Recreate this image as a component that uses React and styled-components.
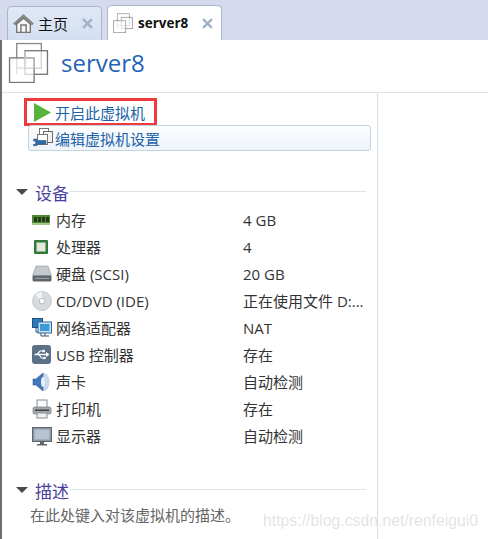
import React from 'react';
import styled, { createGlobalStyle } from 'styled-components';

const Global = createGlobalStyle`
  html, body { margin: 0; padding: 0; background: #fff; }
  body { font-family: "Open Sans", "Noto Sans CJK SC", sans-serif; }
`;

const Page = styled.div`
  position: relative;
  width: 488px;
  height: 539px;
  overflow: hidden;
  background: #fff;
`;

const TabBar = styled.div`
  height: 40px;
  box-sizing: border-box;
  padding: 5px 0 0 7px;
  display: flex;
  align-items: flex-end;
  gap: 5px;
  background: #d5daee;
`;

const Tab = styled.div`
  box-sizing: border-box;
  width: ${p => p.$width}px;
  height: ${p => (p.$active ? 35 : 34)}px;
  padding-left: 5px;
  display: flex;
  align-items: center;
  border: 1px solid #a9b5c9;
  border-bottom: none;
  border-radius: 5px 5px 0 0;
  background: ${p => (p.$active ? '#fff' : 'linear-gradient(#dfe8f6, #d3dff1)')};
`;

const TabLabel = styled.span`
  margin-left: ${p => (p.$active ? 5 : 4)}px;
  font-size: ${p => (p.$active ? 13.5 : 15)}px;
  font-weight: ${p => (p.$active ? 700 : 400)};
  color: #111;
  white-space: nowrap;
`;

const TabClose = styled.span`
  margin-left: auto;
  margin-right: 8px;
  display: flex;
  color: #9db0c4;
`;

const Body = styled.div`
  height: 499px;
  border-left: 2px solid #6e6e6e;
`;

const Header = styled.div`
  height: 53px;
  box-sizing: border-box;
  padding: 0 0 7px 6px;
  display: flex;
  align-items: center;
  gap: 12px;
  border-bottom: 1px solid #dde4e8;
`;

const Title = styled.h1`
  margin: 0;
  font-size: 24px;
  font-weight: 400;
  color: #1f63b5;
`;

const Content = styled.div`
  display: flex;
  height: 446px;
`;

const Side = styled.div`
  box-sizing: border-box;
  width: 376px;
  padding: 5px 0 0 14px;
  border-right: 1px solid #d3e0e8;
`;

const Action = styled.div`
  box-sizing: border-box;
  display: flex;
  align-items: center;
  gap: 4px;
  font-size: 15px;
  color: #2161a8;
  white-space: nowrap;
`;

const StartAction = styled(Action)`
  width: 133px;
  height: 28px;
  margin-left: 8px;
  padding-left: 7px;
  border: 3px solid #ee3a3f;
`;

const EditAction = styled(Action)`
  width: 343px;
  height: 26px;
  margin: -1px 0 0 12px;
  padding-left: 3px;
  gap: 1px;
  border: 1px solid #c5d3dc;
  border-radius: 3px;
  background: linear-gradient(#fcfdfe, #edf4fb);
`;

const Section = styled.section`
  margin-top: ${p => p.$top}px;
`;

const SectionHead = styled.div`
  display: flex;
  align-items: center;
  height: 22px;
  color: #4b3f9e;
  font-size: 17px;
`;

const Caret = styled.span`
  width: 0;
  height: 0;
  margin-right: 7px;
  border-left: 6px solid transparent;
  border-right: 6px solid transparent;
  border-top: 6px solid #4a4a4a;
`;

const Rule = styled.span`
  flex: none;
  width: 296px;
  height: 1px;
  margin: 0 0 2px 1px;
  background: #dbe2ea;
`;

const Devices = styled.div`
  margin: 3px 0 0 16px;
`;

const Device = styled.div`
  display: grid;
  grid-template-columns: 24px 187px 1fr;
  align-items: center;
  height: 27px;
  font-size: 15px;
  color: #333;
  white-space: nowrap;
`;

const Note = styled.div`
  margin: 3px 0 0 14px;
  font-size: 15px;
  color: #666;
`;

const Watermark = styled.div`
  position: absolute;
  left: 263px;
  top: 512px;
  font-family: "Liberation Sans", sans-serif;
  font-size: 15.8px;
  color: rgba(170, 170, 170, 0.34);
  white-space: nowrap;
`;

const Home = () => (
  <svg width="21" height="21" viewBox="0 0 20 20">
    <path d="M.5 10 10 1.500 19.500 10l-1.500 1.500L10 4.500l-8 7z" fill="#8b8b8b" stroke="#666" strokeWidth=".5" />
    <path d="M3.500 10.500V18.500h13v-8L10 5z" fill="#f6f6f6" stroke="#777" strokeWidth="1.300" />
    <path d="M7.500 18.500v-7h5v7" fill="none" stroke="#777" strokeWidth="1.400" />
  </svg>
);

const Close = () => (
  <svg width="11" height="11" viewBox="0 0 10 10">
    <path d="M1 1l8 8M9 1 1 9" stroke="currentColor" strokeWidth="2" />
  </svg>
);

const VmIcon = ({ size }) => (
  <svg width={size} height={size} viewBox="0 0 40 40" fill="none">
    <rect x="8.500" y="1.500" width="24" height="24" stroke="#8a8a8a" strokeWidth="1.300" fill="#fff" />
    <rect x="16.500" y="8.500" width="22" height="23" stroke="#777" strokeWidth="1.300" fill="#fff" fillOpacity=".6" />
    <rect x="1.500" y="15.500" width="24" height="24" stroke="#777" strokeWidth="1.300" fill="#fff" fillOpacity=".7" />
    <path d="M16.500 15.500h9v10h-9z" stroke="#c6d0d8" strokeWidth="1" />
    <path d="M16.500 8.500v7M8.500 25.500v6" stroke="#d4dbe0" strokeWidth="1" />
  </svg>
);

const Play = () => (
  <svg width="17" height="19" viewBox="0 0 17 19">
    <path d="M0 0l17 9.500L0 19z" fill="#57b33e" />
  </svg>
);

const Wrench = () => (
  <svg width="22" height="22" viewBox="0 0 22 22" fill="none">
    <rect x="7.500" y="1.500" width="9" height="9" stroke="#777" fill="#fff" />
    <rect x="11.500" y="4.500" width="9" height="11" stroke="#666" fill="#f4f4f4" />
    <rect x="5.500" y="7.500" width="10" height="10" stroke="#777" fill="#fff" />
    <path d="M1 13c2-1.500 4-1.500 5 .5h8v3.500H6c-1 2-3 2.500-5 1l3-1.500-.2-1.500z" fill="#2f6fa8" stroke="#1e4f7d" strokeWidth=".6" />
  </svg>
);

const Ram = () => (
  <svg width="18" height="18" viewBox="0 0 18 18">
    <rect x="0" y="4" width="18" height="10" fill="#4e8a34" />
    <rect x="0" y="12" width="18" height="2" fill="#a8c48a" />
    <path d="M2 6h3v5H2zM6 6h3v5H6zM10 6h3v5h-3zM14 6h3v5h-3z" fill="#26391d" />
  </svg>
);

const Cpu = () => (
  <svg width="18" height="18" viewBox="0 0 18 18">
    <rect x="2" y="2" width="14" height="14" rx="1" fill="#2f7a3a" />
    <rect x="4.500" y="4.500" width="9" height="9" fill="#e4e7dc" stroke="#9aa88f" strokeWidth=".5" />
  </svg>
);

const Disk = () => (
  <svg width="20" height="18" viewBox="0 0 20 18">
    <path d="M4 1h12l3.500 10H.5z" fill="#c4c9ce" stroke="#8f959b" strokeWidth=".6" />
    <rect x=".5" y="10.500" width="19" height="6" rx="1.500" fill="#5f666c" />
    <rect x="3" y="12.800" width="14" height="1.200" fill="#959ca2" />
  </svg>
);

const Cd = () => (
  <svg width="20" height="20" viewBox="0 0 20 20">
    <circle cx="10" cy="10" r="9.500" fill="#d6dbe0" stroke="#adb4ba" strokeWidth=".6" />
    <path d="M10 10 3 4a9.500 9.500 0 0 1 7-3z" fill="#f1f4f6" />
    <circle cx="10" cy="10" r="2.800" fill="#fff" stroke="#a2a9af" strokeWidth=".7" />
  </svg>
);

const Net = () => (
  <svg width="20" height="20" viewBox="0 0 20 20">
    <rect x="0.500" y="0.500" width="10" height="9" fill="#2f79bb" stroke="#23527f" />
    <rect x="6" y="4" width="13.500" height="11" fill="#c9e2f5" stroke="#33689a" />
    <rect x="8" y="6" width="9.500" height="7" fill="#3c9ad9" />
    <path d="M4 10v4h2M9 15v3h8M13 15v3" stroke="#35516c" fill="none" />
  </svg>
);

const Usb = () => (
  <svg width="19" height="19" viewBox="0 0 19 19">
    <rect width="19" height="19" rx="3" fill="#5a7188" />
    <path d="M2.500 9.500h12" stroke="#fff" strokeWidth="1.500" />
    <path d="M14 7l3.500 2.500L14 12z" fill="#fff" />
    <path d="M5 9.500 8 6h3M7 9.500l2.500 3.500H12" stroke="#fff" strokeWidth="1.200" fill="none" />
    <rect x="10.500" y="4.800" width="2.400" height="2.400" fill="#fff" />
    <circle cx="12.500" cy="13" r="1.300" fill="#fff" />
  </svg>
);

const Speaker = () => (
  <svg width="18" height="20" viewBox="0 0 18 20">
    <ellipse cx="12.500" cy="10" rx="5" ry="9" fill="#c9d9ea" />
    <path d="M1 7h3l7-6v18l-7-6H1z" fill="#3f78bc" stroke="#2c5a94" strokeWidth=".6" />
    <ellipse cx="11" cy="10" rx="2" ry="5" fill="#e7eef5" />
  </svg>
);

const Printer = () => (
  <svg width="20" height="20" viewBox="0 0 20 20">
    <rect x="5" y="1" width="10" height="8" fill="#fafafa" stroke="#8a8f94" />
    <rect x="1" y="8" width="18" height="7" rx="1.500" fill="#a3a8ad" stroke="#6d7277" strokeWidth=".6" />
    <rect x="3" y="10.500" width="14" height="1.500" fill="#3e4246" />
    <rect x="5" y="14" width="10" height="5" fill="#f0f0f0" stroke="#8a8f94" />
  </svg>
);

const Monitor = () => (
  <svg width="20" height="20" viewBox="0 0 20 20">
    <rect x="0.500" y="1.500" width="19" height="14" fill="#8d98a2" stroke="#5c666f" />
    <rect x="2.500" y="3.500" width="15" height="10" fill="#b5c5d3" />
    <path d="M8 16h4v2h3v1.500H5V18h3z" fill="#5c666f" />
  </svg>
);

const devices = [
  { icon: <Ram />, name: '内存', value: '4 GB' },
  { icon: <Cpu />, name: '处理器', value: '4' },
  { icon: <Disk />, name: '硬盘 (SCSI)', value: '20 GB' },
  { icon: <Cd />, name: 'CD/DVD (IDE)', value: '正在使用文件 D:...' },
  { icon: <Net />, name: '网络适配器', value: 'NAT' },
  { icon: <Usb />, name: 'USB 控制器', value: '存在' },
  { icon: <Speaker />, name: '声卡', value: '自动检测' },
  { icon: <Printer />, name: '打印机', value: '存在' },
  { icon: <Monitor />, name: '显示器', value: '自动检测' },
];

const App = () => (
  <Page>
    <Global />
    <TabBar>
      <Tab $width={95}>
        <Home />
        <TabLabel>主页</TabLabel>
        <TabClose><Close /></TabClose>
      </Tab>
      <Tab $width={115} $active>
        <VmIcon size={20} />
        <TabLabel $active>server8</TabLabel>
        <TabClose><Close /></TabClose>
      </Tab>
    </TabBar>
    <Body>
      <Header>
        <VmIcon size={41} />
        <Title>server8</Title>
      </Header>
      <Content>
        <Side>
          <StartAction><Play />开启此虚拟机</StartAction>
          <EditAction><Wrench />编辑虚拟机设置</EditAction>
          <Section $top={30}>
            <SectionHead><Caret />设备<Rule /></SectionHead>
            <Devices>
              {devices.map(d => (
                <Device key={d.name}>
                  {d.icon}
                  <span>{d.name}</span>
                  <span>{d.value}</span>
                </Device>
              ))}
            </Devices>
          </Section>
          <Section $top={30}>
            <SectionHead><Caret />描述<Rule /></SectionHead>
            <Note>在此处键入对该虚拟机的描述。</Note>
          </Section>
        </Side>
      </Content>
    </Body>
    <Watermark>https://blog.csdn.net/renfeigui0</Watermark>
  </Page>
);

export default App;
